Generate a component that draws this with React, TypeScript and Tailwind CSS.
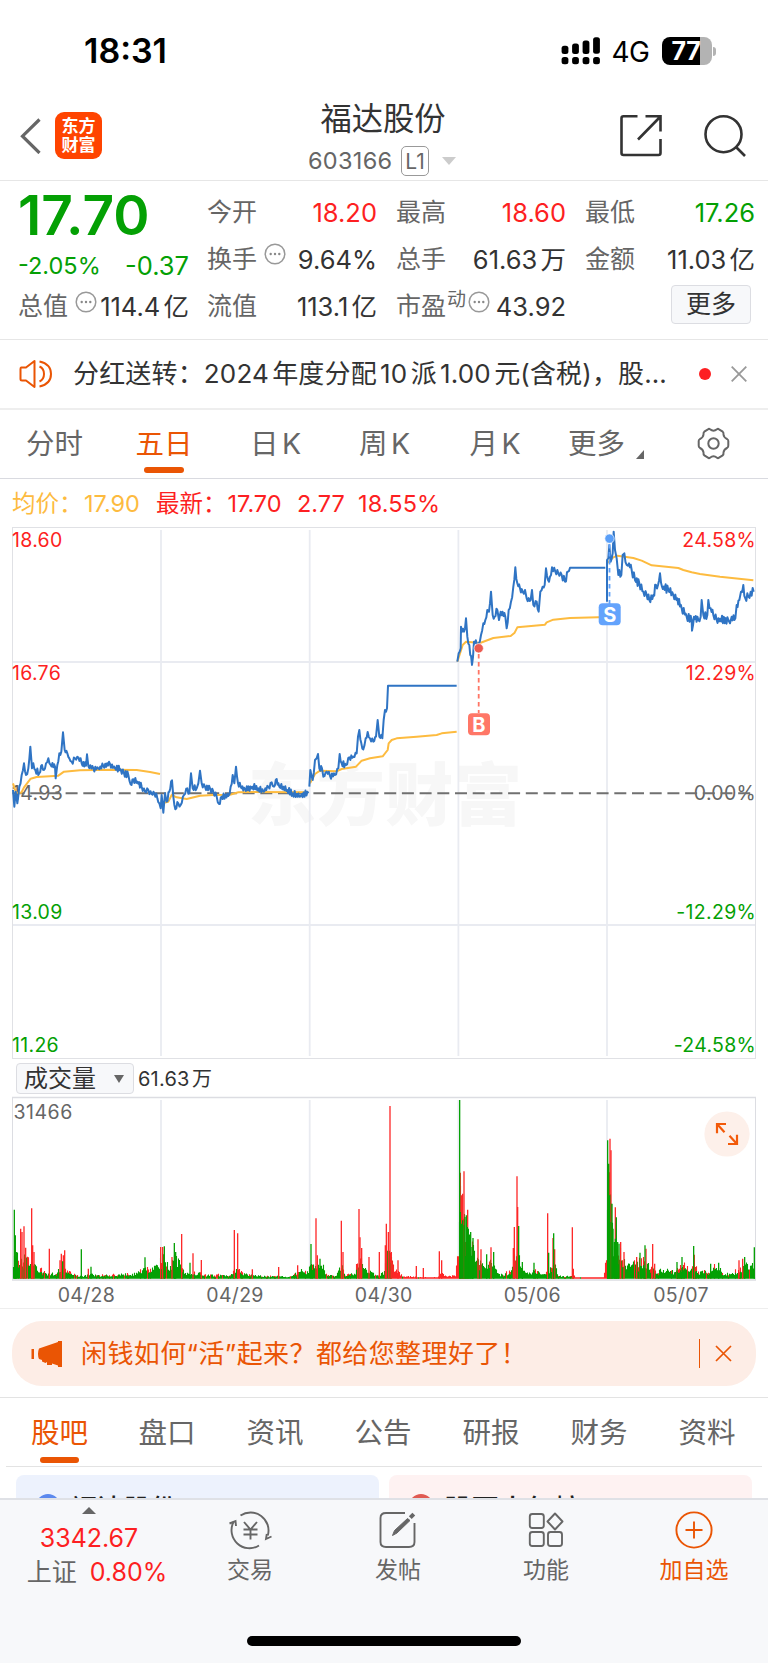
import type { ReactNode } from "react";

type Pt = [number, number];

const BLUE = "#2f74c4";
const YELLOW = "#fdbb3f";
const RED = "#fd1f22";
const GREEN = "#04a004";

/* Chart data is stored in thirds of a pixel. */
const RIGHT = 1140;

const price: { off: number; amp: number; pts: Pt[] }[] = [
  {
    off: 0,
    amp: 10,
    pts: [[39,810],[43,860],[47,815],[52,850],[58,800],[65,765],[72,730],[78,765],[85,745],[91,680],[96,745],[100,730],[106,750],[118,760],[126,735],[132,750],[138,730],[145,715],[152,735],[165,740],[167,775],[172,735],[178,700],[184,695],[189,637],[194,690],[202,700],[208,715],[215,725],[225,715],[235,712],[245,730],[258,737],[261,703],[265,738],[280,745],[295,745],[310,738],[330,732],[345,745],[362,748],[372,760],[385,765],[392,793],[400,778],[412,785],[425,800],[435,815],[445,810],[455,822],[463,820],[472,835],[478,850],[482,865],[485,825],[490,878],[495,820],[500,845],[508,815],[516,781],[520,830],[526,868],[535,850],[542,855],[552,825],[562,805],[568,820],[573,760],[578,805],[590,805],[595,790],[600,752],[605,790],[615,800],[630,805],[640,815],[650,830],[657,852],[665,830],[685,828],[692,800],[698,765],[703,790],[708,740],[714,790],[722,800],[735,808],[757,800],[775,805],[790,815],[805,800],[815,787],[822,800],[830,777],[838,800],[850,800],[862,810],[878,820],[890,822],[898,830],[905,822],[925,820]],
  },
  {
    off: 0,
    amp: 9,
    pts: [[928,800],[931,750],[938,780],[945,720],[950,715],[954,702],[958,745],[966,745],[970,770],[980,755],[990,768],[1005,765],[1015,745],[1019,702],[1025,730],[1038,735],[1048,712],[1060,710],[1070,700],[1074,650],[1078,630],[1084,670],[1090,688],[1097,655],[1103,636],[1110,655],[1120,665],[1128,650],[1133,600],[1138,650],[1147,655],[1151,600],[1155,570],[1161,565],[1164,497],[1370,497]],
  },
  {
    off: RIGHT,
    amp: 11,
    pts: [[232,425],[236,400],[242,385],[243,320],[252,335],[258,295],[262,350],[268,375],[276,435],[282,365],[290,370],[296,370],[303,345],[310,310],[316,300],[322,270],[327,275],[333,215],[338,285],[344,290],[352,270],[357,300],[362,275],[376,290],[380,325],[386,270],[393,245],[400,200],[406,142],[412,190],[420,205],[428,215],[435,210],[440,235],[452,240],[456,210],[460,255],[470,245],[476,275],[481,215],[488,200],[494,195],[498,145],[504,180],[510,170],[516,142],[526,155],[535,160],[545,165],[555,185],[564,155],[570,143],[676,143]],
  },
  {
    off: RIGHT,
    amp: 13,
    pts: [[681,245],[681,120],[685,115],[688,75],[692,125],[698,100],[701,35],[705,90],[710,115],[715,165],[718,150],[724,165],[728,105],[733,100],[740,135],[747,130],[755,150],[765,180],[778,190],[790,215],[800,225],[808,240],[820,225],[828,195],[834,195],[840,160],[846,200],[865,210],[880,225],[892,235],[905,265],[920,290],[935,300],[936,332],[942,290],[955,300],[962,290],[965,240],[970,285],[982,285],[985,240],[992,265],[1000,285],[1010,300],[1045,300],[1050,310],[1055,290],[1066,295],[1070,255],[1078,240],[1083,215],[1090,195],[1096,235],[1105,230],[1112,215],[1121,215]],
  },
];

const average: { off: number; pts: Pt[] }[] = [
  { off: 0, pts: [[39,790],[48,818],[64,818],[72,802],[92,776],[110,771],[175,767],[192,755],[240,751],[330,749],[410,750],[450,756],[480,762]] },
  { off: 0, pts: [[484,850],[505,845],[515,825],[530,832],[560,837],[600,827],[640,825],[690,824],[715,817],[760,816],[925,817]] },
  { off: 0, pts: [[930,790],[945,762],[960,752],[1010,754],[1025,747],[1068,740],[1085,722],[1110,715],[1148,709],[1163,690],[1166,670],[1175,660],[1190,655],[1250,650],[1310,645],[1325,640],[1370,635]] },
  { off: RIGHT, pts: [[232,425],[240,400],[248,375],[258,365],[300,369],[340,354],[392,348],[404,338],[412,322],[495,314],[500,307],[520,299],[570,294],[655,292],[672,292]] },
  { off: RIGHT, pts: [[681,130],[700,112],[712,107],[760,114],[785,122],[815,136],[895,144],[910,150],[935,157],[960,162],[1020,170],[1120,181]] },
];

function makeRandom(seed: number) {
  let s = seed;
  return () => {
    s = (s * 16807) % 2147483647;
    return s / 2147483647;
  };
}

function toPoints(pts: Pt[], off: number, amp: number, seed: number) {
  const rand = makeRandom(seed);
  const out: string[] = [];
  pts.forEach(([x, y], i) => {
    out.push(`${((x + off) / 3).toFixed(2)},${(y / 3).toFixed(2)}`);
    const next = pts[i + 1];
    if (!next || amp === 0) return;
    const dx = next[0] - x;
    if (dx > 60) return;
    const steps = Math.floor(dx / 2.6);
    for (let k = 1; k < steps; k++) {
      const t = k / steps;
      const side = k % 2 ? 1 : -1;
      const ny = y + (next[1] - y) * t + side * (0.25 + rand() * 0.75) * amp;
      out.push(`${((x + off + dx * t) / 3).toFixed(2)},${(ny / 3).toFixed(2)}`);
    }
  });
  return out.join(" ");
}

const V = 1152;
const envelope: Pt[] = [
  [39,75],[60,80],[80,75],[100,55],[120,38],[140,15],[165,20],[185,40],[200,30],[220,14],[250,8],[270,18],[300,12],[350,14],[380,18],[400,18],[420,26],[440,38],[455,34],[475,55],[482,75],[495,80],[510,40],[525,75],[540,55],[555,20],[575,20],[600,20],[620,14],[690,12],[705,38],[730,18],[760,12],[800,10],[860,8],[880,14],[900,30],[925,30],[935,60],[950,45],[970,50],[975,15],[1010,12],[1025,50],[1035,12],[1065,20],[1080,90],[1095,60],[1105,30],[1125,15],[1150,20],
  [V+10,90],[V+18,100],[V+30,40],[V+45,20],[V+60,8],[V+100,6],[V+150,4],[V+165,8],[V+175,20],[V+190,8],[V+215,10],[V+222,80],[V+228,250],[V+245,210],[V+255,150],[V+268,110],[V+280,65],[V+300,45],[V+320,65],[V+335,38],[V+345,15],[V+370,20],[V+385,40],[V+400,120],[V+410,50],[V+430,20],[V+450,30],[V+470,20],[V+490,20],[V+500,40],[V+510,80],[V+520,16],[V+540,8],[V+560,10],[V+568,15],[V+575,4],[V+660,4],[V+668,80],[V+672,300],[V+680,260],[V+688,150],[V+698,125],[V+710,95],[V+725,65],[V+740,45],[V+755,62],[V+785,60],[V+800,48],[V+820,28],[V+840,32],[V+870,26],[V+890,55],[V+915,32],[V+930,42],[V+945,26],[V+975,24],[V+985,42],[V+1005,40],[V+1020,18],[V+1040,18],[V+1065,30],[V+1085,55],[V+1100,38],[V+1111,60],
];

const spikes: [number, number, "r" | "g"][] = [
  [43,207,"g"],[46,130,"g"],[50,80,"g"],[62,150,"r"],[66,140,"r"],[72,157,"r"],[77,93,"r"],[95,211,"r"],[98,100,"r"],[102,80,"r"],[148,90,"r"],[180,55,"r"],[184,75,"r"],[190,70,"r"],[194,85,"r"],[188,52,"g"],[244,88,"g"],[265,30,"r"],[273,36,"g"],[435,64,"g"],
  [482,95,"r"],[488,95,"r"],[493,97,"g"],[523,107,"g"],[527,80,"g"],[516,65,"r"],[545,134,"r"],[570,48,"g"],[579,76,"r"],[604,56,"r"],[703,146,"r"],[713,136,"r"],[757,28,"r"],[836,35,"r"],[893,40,"r"],
  [933,104,"g"],[948,181,"r"],[952,70,"r"],[960,60,"g"],[1024,174,"r"],[1029,80,"r"],[1077,209,"r"],[1080,124,"r"],[1085,92,"r"],[1107,65,"r"],[1138,80,"r"],
  [V+4,100,"r"],[V+7,165,"r"],[V+13,140,"r"],[V+18,518,"r"],[V+22,80,"r"],[V+42,55,"r"],[V+97,38,"r"],[V+118,32,"r"],[V+166,82,"r"],[V+173,55,"r"],
  [V+229,318,"r"],[V+227,536,"g"],[V+233,250,"r"],[V+236,255,"r"],[V+240,322,"r"],[V+251,207,"r"],[V+282,118,"r"],[V+291,88,"r"],[V+321,94,"r"],[V+391,155,"r"],[V+388,92,"r"],[V+399,307,"r"],[V+401,215,"r"],[V+491,196,"r"],[V+507,122,"r"],[V+512,88,"r"],[V+565,154,"r"],[V+568,30,"r"],
  [V+229,200,"g"],[V+232,165,"g"],[V+236,175,"g"],[V+240,160,"g"],[V+243,185,"g"],[V+247,190,"g"],[V+250,155,"g"],[V+253,150,"g"],[V+256,100,"g"],[V+260,140,"g"],[V+264,95,"g"],[V+267,122,"g"],[V+308,73,"g"],[V+329,80,"g"],[V+404,158,"g"],[V+415,50,"g"],[V+450,48,"g"],[V+494,78,"g"],[V+509,136,"g"],
  [V+678,420,"r"],[V+681,385,"r"],[V+694,214,"r"],[V+710,110,"r"],[V+720,80,"r"],[V+758,65,"r"],[V+786,90,"r"],[V+806,104,"r"],[V+812,45,"r"],[V+931,72,"r"],[V+1065,55,"r"],[V+1076,60,"r"],
  [V+671,415,"g"],[V+674,345,"g"],[V+677,250,"g"],[V+681,170,"g"],[V+684,225,"g"],[V+687,150,"g"],[V+691,110,"g"],[V+694,120,"g"],[V+697,184,"g"],[V+701,110,"g"],[V+705,105,"g"],[V+768,78,"g"],[V+783,100,"g"],[V+879,50,"g"],[V+894,65,"g"],[V+929,98,"g"],[V+980,45,"g"],[V+1004,48,"g"],[V+1082,65,"g"],[V+1111,94,"g"],
];

function envelopeAt(x: number) {
  for (let i = 0; i < envelope.length - 1; i++) {
    const [x0, h0] = envelope[i];
    const [x1, h1] = envelope[i + 1];
    if (x >= x0 && x <= x1) return h0 + ((h1 - h0) * (x - x0)) / (x1 - x0);
  }
  return 0;
}

function buildBars() {
  const rand = makeRandom(4211);
  const red: string[] = [];
  const green: string[] = [];
  for (let x = 40.5; x < 2264; x += 3) {
    const allRed = (x > V + 20 && x < V + 224) || (x > V + 570 && x < V + 668);
    const h = envelopeAt(x) * (0.45 + 0.55 * rand());
    const isRed = rand() < (allRed ? 0.96 : 0.25);
    const shown = Math.max(h, 4);
    const bar = `M${(x / 3).toFixed(2)} 182.7v-`;
    if (isRed) {
      red.push(`${bar}${((shown * 1.15) / 3).toFixed(2)}`);
      if (!allRed && rand() < 0.75) green.push(`${bar}${(shown / 4.2).toFixed(2)}`);
    } else {
      green.push(`${bar}${(shown / 3).toFixed(2)}`);
    }
  }
  return { red: red.join(""), green: green.join("") };
}

const bars = buildBars();
const gridX = [161, 309.7, 458.4, 607];

function PriceChart() {
  return (
    <svg className="block h-[541px] w-full shrink-0" viewBox="0 0 768 541" fontFamily="Inter, 'Noto Sans CJK SC', sans-serif">
      <text x="248" y="300" fontSize="68" fontWeight="900" fill="#f7f7f7" textLength="274" fontFamily="'Noto Sans CJK SC', sans-serif">东方财富</text>
      <g stroke="#e9ebf1" strokeWidth="1.8" fill="none">
        {gridX.map((x) => <path key={x} d={`M${x} 10V536`} />)}
        <path d="M12.5 142H755.5M12.5 405H755.5" />
      </g>
      <rect x="12.5" y="7.5" width="743" height="531" fill="none" stroke="#e0e1e5" />
      <g fontSize="19.5" letterSpacing="0.3">
        <text x="12" y="27.300" fill={RED}>18.60</text>
        <text x="12" y="159.700" fill={RED}>16.76</text>
        <text x="12" y="279.500" fill="#666">14.93</text>
        <text x="12" y="399.300" fill={GREEN}>13.09</text>
        <text x="12" y="531.500" fill={GREEN}>11.26</text>
        <g textAnchor="end">
          <text x="756" y="27.300" fill={RED}>24.58%</text>
          <text x="756" y="159.700" fill={RED}>12.29%</text>
          <text x="756" y="279.500" fill="#666">0.00%</text>
          <text x="756" y="399.300" fill={GREEN}>-12.29%</text>
          <text x="756" y="531.500" fill={GREEN}>-24.58%</text>
        </g>
      </g>
      <path d="M12.5 273.3H755" stroke="#707070" strokeWidth="2" strokeDasharray="12 5.7" />
      <g fill="none" stroke={YELLOW} strokeWidth="2" strokeLinejoin="round">
        {average.map((s, i) => <polyline key={i} points={toPoints(s.pts, s.off, 0, 1)} />)}
      </g>
      <g fill="none" stroke={BLUE} strokeWidth="2" strokeLinejoin="round">
        {price.map((s, i) => <polyline key={i} points={toPoints(s.pts, s.off, s.amp, 97 + i * 31)} />)}
      </g>
      <path d="M478.7 134V193" stroke="#ff7565" strokeWidth="1.8" strokeDasharray="4.4 3.6" />
      <circle cx="478.7" cy="128.3" r="4.7" fill="#ec5a50" stroke="#fff" strokeOpacity=".7" />
      <rect x="468" y="193.3" width="22" height="22" rx="4" fill="#ff7767" />
      <text x="478.9" y="211.5" fontSize="20" fontWeight="700" fill="#fff" textAnchor="middle">B</text>
      <path d="M609.5 24V84" stroke="#5fa2fb" strokeWidth="1.8" strokeDasharray="4.4 3.6" />
      <circle cx="609.5" cy="18.6" r="4.7" fill="#5a9ff8" stroke="#fff" strokeOpacity=".7" />
      <rect x="598.7" y="83.3" width="22" height="22" rx="4" fill="#63a3fc" />
      <text x="609.7" y="101.5" fontSize="20" fontWeight="700" fill="#fff" textAnchor="middle">S</text>
    </svg>
  );
}

function VolumeChart() {
  return (
    <svg className="block h-[186px] w-full shrink-0" viewBox="0 0 768 186" fontFamily="Inter, sans-serif">
      <g stroke="#e9ebf1" strokeWidth="1.8">
        {gridX.map((x) => <path key={x} d={`M${x} 4V183`} />)}
      </g>
      <path d="M12.5 1.3V184M755.5 1.3V184" stroke="#dcdde2" />
      <path d="M12 1.5H756M12 184H756" stroke="#dcdde2" strokeWidth="1.5" />
      <text x="13.500" y="23.300" fontSize="19.500" letterSpacing="0.5" fill="#666">31466</text>
      <path d={bars.red} stroke="#fd2626" strokeWidth="1.100" />
      <path d={bars.green} stroke={GREEN} strokeWidth="1.100" />
      {spikes.map(([x, h, c], i) => (
        <path key={i} d={`M${x / 3} 182.7v-${h / 3}`} stroke={c === "r" ? "#fd2626" : GREEN} strokeWidth="1.300" />
      ))}
      <circle cx="727" cy="38" r="22.600" fill="#fdf0ea" />
      <path d="M717 37.200v-9.200h9M717.500 28.500l7 7.700M737 38.800v9.200h-9M736.500 47.500l-7-7.700" fill="none" stroke="#f25a0a" strokeWidth="2.200" />
    </svg>
  );
}

function MoreDots({ className }: { className: string }) {
  return (
    <svg className={className} width="22" height="22" viewBox="0 0 22 22">
      <circle cx="11" cy="11" r="9.800" fill="none" stroke="#999" strokeWidth="1.500" />
      <circle cx="6.700" cy="11" r="1.200" fill="#888" />
      <circle cx="11" cy="11" r="1.200" fill="#888" />
      <circle cx="15.300" cy="11" r="1.200" fill="#888" />
    </svg>
  );
}

function Stat({ label, value, color = "text-[#333]", children }: { label: string; value: string; color?: string; children?: ReactNode }) {
  return (
    <div className="flex h-[47px] items-center whitespace-nowrap">
      <span className="text-[25px] text-[#666]">{label}</span>
      {children}
      <span className={`ml-auto text-[25.500px] ${color}`}>{value}</span>
    </div>
  );
}

function StatusBar() {
  return (
    <div className="flex h-[102px] shrink-0 items-center pl-[84px] pr-[52px]">
      <span className="text-[34px] font-semibold text-black">18:31</span>
      <svg className="ml-auto" width="40" height="28" viewBox="0 0 40 28">
        {[0, 1, 2, 3].map((i) => (
          <g key={i}>
            <rect x={0.6 + i * 10.5} y={[8.800, 6.500, 3.500, 0.300][i]} width="6.800" height={[8.200, 10.500, 13.500, 16.500][i]} rx="2.500" />
            <rect x={0.6 + i * 10.5} y="20" width="6.800" height="7.300" rx="2.500" />
          </g>
        ))}
      </svg>
      <span className="ml-[11px] mt-[2px] w-[40px] text-[28px] tracking-[-0.7px] text-black">4G</span>
      <div className="ml-[10px] flex h-[28px] w-[50px] overflow-hidden rounded-[8px] bg-[linear-gradient(90deg,#000_77%,#b3b3b3_77%)] leading-[28px]">
        <span className="pl-[10px] text-[25px] font-bold tracking-[-0.4px] text-white">77</span>
      </div>
      <div className="ml-[1.500px] h-[9px] w-[3px] rounded-r-full bg-[#b3b3b3]" />
    </div>
  );
}

function Header() {
  return (
    <div className="flex h-[79px] shrink-0 border-b border-[#e6e6e6]">
      <div className="flex w-[298px] items-start pl-[20px] pt-[10px]">
        <svg className="mt-[6px]" width="21" height="36" viewBox="0 0 21 36" fill="none" stroke="#666" strokeWidth="3.200">
          <path d="M19.500 1.500L2.500 18.200L19.500 35" />
        </svg>
        <div className="ml-[14px] flex h-[47px] w-[47px] flex-col items-center justify-center rounded-[9px] bg-[#ff4400] text-[17px] font-bold leading-[19px] text-white">
          <span>东方</span>
          <span>财富</span>
        </div>
      </div>
      <div className="flex w-[170px] flex-col items-center">
        <div className="mt-px h-[33px] whitespace-nowrap text-[31.300px] leading-[33px] text-[#333]">福达股份</div>
        <div className="mt-[10px] flex h-[30px] items-center pr-[2px]">
          <span className="w-[88px] text-[23.500px] tracking-[0.3px] text-[#666]">603166</span>
          <span className="ml-[5px] flex h-[30px] w-[28px] items-center justify-center rounded-[5px] border-[1.500px] border-[#999] text-[21px] text-[#666]">L1</span>
          <svg className="ml-[13px]" width="14" height="8" viewBox="0 0 14 8"><path d="M0 0H14L7 8Z" fill="#ccc" /></svg>
        </div>
      </div>
      <div className="flex flex-1 items-start pt-[12px] pl-[151px]">
        <svg className="shrink-0" width="44" height="44" viewBox="0 0 44 44" fill="none" stroke="#333" strokeWidth="2.600">
          <path d="M18.500 2.300H4.500Q2.500 2.300 2.500 4.300V39Q2.500 41 4.500 41H39.500Q41.500 41 41.500 39V25" />
          <path d="M26.500 2.300H41.500V17.500M41 3L19 25.500" />
        </svg>
        <svg className="ml-[40px] shrink-0" width="44" height="44" viewBox="0 0 44 44" fill="none" stroke="#333" strokeWidth="2.600">
          <circle cx="20.500" cy="20.200" r="18" />
          <path d="M33 33L42 42" />
        </svg>
      </div>
    </div>
  );
}

function Stats() {
  return (
    <div className="flex h-[159px] shrink-0 border-b border-[#e6e6e6] pl-[18px] pr-[13px] pt-[8px]">
      <div className="w-[171px] whitespace-nowrap">
        <div className="flex h-[53px] items-center text-[55px] font-semibold text-[#04a004]">17.70</div>
        <div className="flex h-[47px] items-center justify-between text-[#04a004]">
          <span className="text-[23.500px]">-2.05%</span>
          <span className="text-[25.500px]">-0.37</span>
        </div>
        <div className="flex h-[35px] items-center">
          <span className="text-[25px] text-[#666]">总值</span>
          <MoreDots className="mb-[10px] ml-[7px] shrink-0" />
          <span className="ml-auto text-[25.500px] text-[#333]">114.4亿</span>
        </div>
      </div>
      <div className="ml-[18px] w-[170px]">
        <Stat label="今开" value="18.20" color="text-[#fd1f22]" />
        <Stat label="换手" value="9.64%"><MoreDots className="mb-[11px] ml-[7px]" /></Stat>
        <Stat label="流值" value="113.1亿" />
      </div>
      <div className="ml-[19px] w-[170px]">
        <Stat label="最高" value="18.60" color="text-[#fd1f22]" />
        <Stat label="总手" value="61.63万" />
        <Stat label="市盈" value="43.92">
          <span className="mb-[15px] ml-[1px] text-[19px] text-[#666]">动</span>
          <MoreDots className="mb-[10px] ml-[2px]" />
        </Stat>
      </div>
      <div className="ml-[19px] w-[170px]">
        <Stat label="最低" value="17.26" color="text-[#04a004]" />
        <Stat label="金额" value="11.03亿" />
        <div className="ml-auto mr-[4px] mt-[2px] flex h-[39px] w-[80px] items-center justify-center rounded-[4px] border border-[#dcdde2] bg-[#f7f8fa] text-[25px] text-[#333]">更多</div>
      </div>
    </div>
  );
}

function Notice() {
  return (
    <div className="flex h-[70px] shrink-0 items-center border-b-2 border-[#eee] pl-[19px] pr-[21px]">
      <svg width="34" height="30" viewBox="0 0 34 30" fill="none" stroke="#ea5504" strokeWidth="2">
        <path d="M2 8.500Q1.500 8.500 1.500 10V20Q1.500 21.500 3 21.500H7L15.500 28V2L7 8.500Z" strokeLinejoin="round" />
        <path d="M20.500 7.500Q25 9.500 25 15T20.500 22.500M20.500 2.500Q32 5 32 15T20.500 27.500" />
      </svg>
      <span className="ml-[20px] w-[600px] whitespace-nowrap text-[26px] tracking-[0.16px] text-[#333]">分红送转：2024年度分配10派1.00元(含税)，股…</span>
      <span className="ml-[26px] h-[12px] w-[12px] shrink-0 rounded-full bg-[#fd1f22]" />
      <svg className="ml-auto" width="16" height="16" viewBox="0 0 16 16" stroke="#999" strokeWidth="1.800"><path d="M.7 .7L15.300 15.300M15.300 .7L.7 15.300" /></svg>
    </div>
  );
}

function PeriodTabs() {
  return (
    <div className="flex h-[69px] shrink-0 border-b border-[#d9dae0] text-[28.500px] leading-[67px] text-[#666]">
      <div className="w-[109px] text-center">分时</div>
      <div className="flex w-[110px] flex-col items-center text-[#ea5504]">
        <span className="h-[57px]">五日</span>
        <span className="h-[6px] w-[40px] rounded-[3px] bg-[#ea5504]" />
      </div>
      <div className="w-[113px] text-center">日K</div>
      <div className="w-[105px] text-center">周K</div>
      <div className="w-[116px] text-center">月K</div>
      <div className="flex w-[144px] pl-[15px]">
        <span>更多</span>
        <svg className="ml-[11px] mt-[40px]" width="8" height="9" viewBox="0 0 8 9"><path d="M8 0V9H0Z" fill="#666" /></svg>
      </div>
      <svg className="mt-[17px]" width="33" height="33" viewBox="0 0 33 33" fill="none" stroke="#666" strokeWidth="2" strokeLinejoin="round">
        <path d="M11 2.300Q12 1.500 13 2.300Q16.500 5 20 2.300Q21 1.500 22 2.300L25.700 4.700Q26.700 5.500 26.500 7.500Q26.800 10.500 30 12Q31.500 13 31.300 14V18.500Q31.500 20 30 21Q26.800 22.500 26.500 25.500Q26.700 27.300 25.700 28.300L22 30.700Q21 31.500 20 30.700Q16.500 28 13 30.700Q12 31.500 11 30.700L7.300 28.300Q6.300 27.300 6.500 25.500Q6.200 22.500 3 21Q1.500 20 1.700 18.500V14Q1.500 13 3 12Q6.200 10.500 6.500 7.500Q6.300 5.500 7.300 4.700Z" />
        <circle cx="16.500" cy="16.500" r="5.200" />
      </svg>
    </div>
  );
}

function Legend() {
  return (
    <div className="flex h-[41px] shrink-0 items-center whitespace-nowrap pl-[12px] pt-[9px] text-[23.500px] text-[#fd1f22]">
      <span className="w-[144px] text-[#fdbb3f]">均价：<span className="ml-[1.500px]">17.90</span></span>
      <span className="w-[141px]">最新：<span className="ml-px">17.70</span></span>
      <span className="w-[61px]">2.77</span>
      <span className="tracking-[0.1px]">18.55%</span>
    </div>
  );
}

function VolumeHeader() {
  return (
    <div className="flex h-[35px] shrink-0 items-center pl-[16px]">
      <div className="flex h-[31px] w-[118px] items-center justify-between rounded-[4px] border border-[#dcdde2] bg-[#f7f8fa] pl-[7px] pr-[9px] text-[24px] text-[#333]">
        成交量
        <svg width="10" height="8" viewBox="0 0 10 8"><path d="M0 0H10L5 8Z" fill="#666" /></svg>
      </div>
      <span className="ml-[4px] mt-px text-[20px] tracking-[0.2px] text-[#333]">61.63万</span>
    </div>
  );
}

function Banner() {
  return (
    <div className="h-[89px] shrink-0 border-b border-[#e3e3e3] px-[12px] pt-[12px]">
      <div className="flex h-[65px] items-center rounded-[30px] bg-[#fdede6] pl-[19px] pr-[24px] text-[#ea5504]">
        <svg width="32" height="28" viewBox="0 0 32 28" fill="#ea5504">
          <path d="M.5 9H3V19H.5ZM8 8.500L27 2V1H31V27H27V25.500L21 23.500V25H16V22L14.500 23L11 21.500V20L8 19Q7 17 7 14T8 8.500Z" />
        </svg>
        <span className="ml-[18px] whitespace-nowrap text-[26px] tracking-[0.4px]">闲钱如何“活”起来？都给您整理好了！</span>
        <span className="ml-auto h-[29px] w-[1.500px] bg-[#ea5504]" />
        <svg className="ml-[15px]" width="17" height="17" viewBox="0 0 17 17" stroke="#ea5504" strokeWidth="1.700"><path d="M1 1L16 16M16 1L1 16" /></svg>
      </div>
    </div>
  );
}

function InfoTabs() {
  return (
    <div className="shrink-0 px-[6px]">
      <div className="flex h-[69px] border-b border-[#e3e3e3] text-[28.500px] leading-[70px] text-[#666]">
        <div className="flex w-[107px] flex-col items-center text-[#ea5504]">
          <span className="h-[59px]">股吧</span>
          <span className="h-[6px] w-[39px] rounded-[3px] bg-[#ea5504]" />
        </div>
        {["盘口", "资讯", "公告", "研报", "财务", "资料"].map((t) => (
          <div key={t} className="w-[108px] text-center">{t}</div>
        ))}
      </div>
    </div>
  );
}

function Cards() {
  return (
    <div className="flex h-[31px] shrink-0 justify-between overflow-hidden pl-[16px] pr-[16px] pt-[8px] text-[26px] font-medium leading-[34px] text-[#222]">
      <div className="flex h-[80px] w-[363px] rounded-[8px] bg-[#edf2fd] pl-[20px] pt-[17px]">
        <span className="mt-[2px] h-[24px] w-[24px] rounded-full bg-[#5b88ee]" />
        <span className="ml-[11px] tracking-[0.5px]">福达股份</span>
      </div>
      <div className="flex h-[80px] w-[363px] rounded-[8px] bg-[#fef2f2] pl-[20px] pt-[17px]">
        <span className="mt-[2px] h-[24px] w-[24px] rounded-full bg-[#e05a52]" />
        <span className="ml-[11px] text-[27.500px]">股票人气榜</span>
      </div>
    </div>
  );
}

function NavItem({ label, className = "text-[#666]", children }: { label: string; className?: string; children: ReactNode }) {
  return (
    <div className={`flex w-[148px] flex-col items-center ${className}`}>
      <svg className="mt-[9px]" width="44" height="42" viewBox="0 0 44 42" fill="none" stroke="currentColor" strokeWidth="1.900">{children}</svg>
      <span className="mt-[5px] h-[28px] text-[23px] leading-[28px]">{label}</span>
    </div>
  );
}

function BottomBar() {
  return (
    <div className="flex h-[165px] shrink-0 flex-col border-t-2 border-[#dfe1e6] bg-[#f7f8fa]">
      <div className="flex h-[136px]">
        <div className="flex w-[176px] flex-col items-center whitespace-nowrap text-[25px]">
          <svg className="ml-px mt-[7px]" width="14" height="7" viewBox="0 0 14 7"><path d="M0 7H14L7 0Z" fill="#666" /></svg>
          <span className="ml-[2px] mt-[7px] h-[34px] leading-[34px] text-[#fd1f22]">3342.67</span>
          <div className="flex h-[34px] pl-[18px] leading-[34px]">
            <span className="text-[#666]">上证</span>
            <span className="ml-[13px] text-[#fd1f22]">0.80%</span>
          </div>
        </div>
        <NavItem label="交易">
          <path d="M12.500 6.500A18 18 0 0 1 39.800 26.500M31 36.500A18 18 0 0 1 5.500 13" />
          <path d="M1.500 14.500L7.500 12L8 17M43.500 27.500L38 30L38.800 25" />
          <path d="M16 13L22.500 20.500L29 13M22.500 20.500V30.500M15.500 20.500H29.500M15.500 25.500H29.500" />
        </NavItem>
        <NavItem label="发帖">
          <path d="M29 4H10Q4.500 4 4.500 9V33Q4.500 38 10 38H33Q38.500 38 38.500 33V14" />
          <path d="M31.500 9.500L18.500 21.500L16.500 26.500L21 24L34 11.500Z" fill="currentColor" strokeWidth="1" />
          <path d="M34.300 8.700L37.800 5.200" strokeWidth="4" />
        </NavItem>
        <NavItem label="功能">
          <rect x="5.800" y="5" width="14" height="14" rx="2.500" />
          <rect x="5.800" y="23" width="14" height="14" rx="2.500" />
          <rect x="24" y="23" width="14" height="14" rx="2.500" />
          <path d="M31 4.500L38.500 12.500L31 20.500L23.500 12.500Z" strokeLinejoin="round" />
        </NavItem>
        <NavItem label="加自选" className="text-[#ea5504]">
          <circle cx="22" cy="21" r="17.600" />
          <path d="M22 12.500V29.500M13.500 21H30.500" />
        </NavItem>
      </div>
      <div className="mx-auto h-[10px] w-[274px] rounded-full bg-black" />
    </div>
  );
}

export default function App() {
  return (
    <div className="flex h-[1663px] w-[768px] flex-col overflow-hidden bg-white font-['Inter','Noto_Sans_CJK_SC',sans-serif] leading-none [text-autospace:normal]">
      <StatusBar />
      <Header />
      <Stats />
      <Notice />
      <PeriodTabs />
      <Legend />
      <PriceChart />
      <VolumeHeader />
      <VolumeChart />
      <div className="flex h-[27px] shrink-0 border-b border-[#eee] pl-[12px] text-center text-[19.500px] leading-[27px] tracking-[0.3px] text-[#666]">
        {["04/28", "04/29", "04/30", "05/06", "05/07"].map((d) => (
          <span key={d} className="w-[148.700px]">{d}</span>
        ))}
      </div>
      <Banner />
      <InfoTabs />
      <Cards />
      <BottomBar />
    </div>
  );
}
